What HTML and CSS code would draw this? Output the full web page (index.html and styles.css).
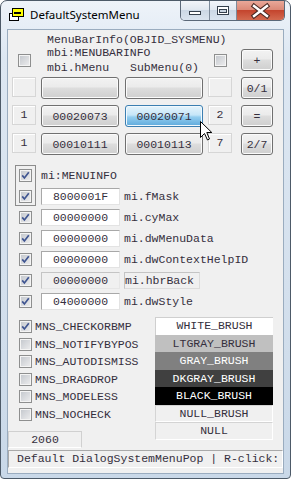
FILE: index.html
```html
<!DOCTYPE html>
<html lang="en">
<head>
   <meta charset="UTF-8">
   <meta name="viewport" content="width=device-width, initial-scale=1.0">
   <title>DefaultSystemMenu</title>
   <link rel="stylesheet" href="styles.css">
</head>
<body>
   <div class="window">
      <div class="titlebar">
         <svg class="app-icon" width="15" height="13" viewBox="0 0 15 13">
            <rect x="0.5" y="5.5" width="9" height="7" fill="#fff" stroke="#000"/>
            <rect x="3.5" y="0.5" width="11" height="8" fill="#ffff00" stroke="#000"/>
            <rect x="5" y="4" width="7" height="2" fill="#000"/>
         </svg>
         <span class="title">DefaultSystemMenu</span>
         <div class="caption-buttons">
            <div class="cap cap-min">
               <svg width="28" height="19" viewBox="0 0 28 19">
                  <rect x="8.5" y="10.5" width="11" height="3" fill="#fff" stroke="#35404c"/>
               </svg>
            </div>
            <div class="cap cap-max">
               <svg width="27" height="19" viewBox="0 0 27 19">
                  <rect x="7.5" y="5.5" width="11" height="8" fill="#fff" stroke="#35404c"/>
                  <rect x="9.5" y="8.5" width="7" height="3" fill="#c9d4e0" stroke="#35404c"/>
               </svg>
            </div>
            <div class="cap cap-close">
               <svg width="47" height="19" viewBox="0 0 47 19">
                  <path d="M17 5 L30 15 M30 5 L17 15" stroke="#4a2a24" stroke-width="4.6" stroke-linecap="square"/>
                  <path d="M17 5 L30 15 M30 5 L17 15" stroke="#fff" stroke-width="2.4" stroke-linecap="square"/>
               </svg>
            </div>
         </div>
      </div>

      <div class="client">
         <div class="mbi-head">
            <span class="chk"></span>
            <div class="mbi-text">
               <div>MenuBarInfo(OBJID_SYSMENU)</div>
               <div>mbi:MENUBARINFO</div>
               <div class="mbi-last"><span class="hmenu">mbi.hMenu</span>SubMenu(0)</div>
            </div>
            <span class="chk"></span>
            <div class="btn">+</div>
         </div>

         <div class="mbi-rows">
            <div class="box"></div>
            <div class="btn btn-wide"></div>
            <div class="btn btn-wide"></div>
            <div class="box"></div>
            <div class="btn">0/1</div>

            <div class="box">1</div>
            <div class="btn btn-wide">00020073</div>
            <div class="btn btn-wide hot">00020071</div>
            <div class="box">2</div>
            <div class="btn">=</div>

            <div class="box">1</div>
            <div class="btn btn-wide">00010111</div>
            <div class="btn btn-wide">00010113</div>
            <div class="box">7</div>
            <div class="btn">2/7</div>
         </div>

         <div class="mi">
            <div class="mi-top">
               <div class="mi-group">
                  <span class="chk checked"><svg width="11" height="11" viewBox="0 0 11 11"><path d="M2.2 5.4 L4.4 8 L8.8 2.2" fill="none" stroke="#3f5591" stroke-width="1.7"/></svg></span>
                  <span class="chk checked"><svg width="11" height="11" viewBox="0 0 11 11"><path d="M2.2 5.4 L4.4 8 L8.8 2.2" fill="none" stroke="#3f5591" stroke-width="1.7"/></svg></span>
               </div>
               <div class="mi-top-main">
                  <div class="mi-row">mi:MENUINFO</div>
                  <div class="mi-row">
                     <span class="edit">8000001F</span>
                     <span class="label">mi.fMask</span>
                  </div>
               </div>
            </div>

            <div class="mi-list">
               <div class="mi-row">
                  <span class="chk checked"><svg width="11" height="11" viewBox="0 0 11 11"><path d="M2.2 5.4 L4.4 8 L8.8 2.2" fill="none" stroke="#3f5591" stroke-width="1.7"/></svg></span>
                  <span class="edit">00000000</span>
                  <span class="label">mi.cyMax</span>
               </div>
               <div class="mi-row">
                  <span class="chk checked"><svg width="11" height="11" viewBox="0 0 11 11"><path d="M2.2 5.4 L4.4 8 L8.8 2.2" fill="none" stroke="#3f5591" stroke-width="1.7"/></svg></span>
                  <span class="edit">00000000</span>
                  <span class="label">mi.dwMenuData</span>
               </div>
               <div class="mi-row">
                  <span class="chk checked"><svg width="11" height="11" viewBox="0 0 11 11"><path d="M2.2 5.4 L4.4 8 L8.8 2.2" fill="none" stroke="#3f5591" stroke-width="1.7"/></svg></span>
                  <span class="edit">00000000</span>
                  <span class="label">mi.dwContextHelpID</span>
               </div>
               <div class="mi-row">
                  <span class="chk checked"><svg width="11" height="11" viewBox="0 0 11 11"><path d="M2.2 5.4 L4.4 8 L8.8 2.2" fill="none" stroke="#3f5591" stroke-width="1.7"/></svg></span>
                  <span class="edit disabled">00000000</span>
                  <span class="label label-box">mi.hbrBack</span>
               </div>
               <div class="mi-row">
                  <span class="chk checked"><svg width="11" height="11" viewBox="0 0 11 11"><path d="M2.2 5.4 L4.4 8 L8.8 2.2" fill="none" stroke="#3f5591" stroke-width="1.7"/></svg></span>
                  <span class="edit">04000000</span>
                  <span class="label">mi.dwStyle</span>
               </div>
            </div>
         </div>

         <div class="mns">
            <div class="mns-checks">
               <div class="mns-row"><span class="chk checked"><svg width="11" height="11" viewBox="0 0 11 11"><path d="M2.2 5.4 L4.4 8 L8.8 2.2" fill="none" stroke="#3f5591" stroke-width="1.7"/></svg></span>MNS_CHECKORBMP</div>
               <div class="mns-row"><span class="chk"></span>MNS_NOTIFYBYPOS</div>
               <div class="mns-row"><span class="chk"></span>MNS_AUTODISMISS</div>
               <div class="mns-row"><span class="chk"></span>MNS_DRAGDROP</div>
               <div class="mns-row"><span class="chk"></span>MNS_MODELESS</div>
               <div class="mns-row"><span class="chk"></span>MNS_NOCHECK</div>
               <div class="count">2060</div>
            </div>
            <div class="brushes">
               <div class="brush brush-white">WHITE_BRUSH</div>
               <div class="brush brush-ltgray">LTGRAY_BRUSH</div>
               <div class="brush brush-gray">GRAY_BRUSH</div>
               <div class="brush brush-dkgray">DKGRAY_BRUSH</div>
               <div class="brush brush-black">BLACK_BRUSH</div>
               <div class="brush brush-null">NULL_BRUSH</div>
               <div class="brush brush-null">NULL</div>
            </div>
         </div>

         <div class="status">Default DialogSystemMenuPop | R-click:</div>
      </div>

      <svg class="cursor" width="13" height="20" viewBox="0 0 13 20">
         <path d="M0.5 0.5 L0.5 16.5 L4.5 12.5 L7.5 19 L9.5 18 L6.8 11.5 L11.8 11.5 Z" fill="#fff" stroke="#000"/>
      </svg>
   </div>
</body>
</html>
```

FILE: styles.css
```css
body {
   margin: 0;
   background: #fff;
}

.window {
   position: relative;
   width: 291px;
   height: 479px;
   box-sizing: border-box;
   border: 1px solid #4d5a68;
   border-radius: 7px 7px 4px 4px;
   padding: 0 7px 5px;
   background: linear-gradient(#eef3f9, #dde7f2 12%, #d4e0ed 60%, #c9d8e8);
}

/* title bar */

.titlebar {
   display: flex;
   align-items: flex-start;
   height: 29px;
   font-family: "Noto Sans", "Open Sans", sans-serif;
   font-size: 11.5px;
   color: #000;
}

.app-icon {
   margin: 7px 0 0 1px;
}

.title {
   margin: 5px 0 0 6px;
   line-height: 18px;
}

.caption-buttons {
   display: flex;
   margin-left: auto;
   margin-right: -2px;
   border: 1px solid #5b6878;
   border-top: none;
   border-radius: 0 0 5px 5px;
   overflow: hidden;
}

.cap {
   height: 19px;
}

.cap svg {
   display: block;
}

.cap-min,
.cap-max {
   width: 28px;
   background: linear-gradient(#f2f5f9, #e1e8f0 45%, #ccd8e5 50%, #dae4ef);
   border-right: 1px solid #7d8b9b;
}

.cap-max {
   width: 26px;
}

.cap-close {
   width: 47px;
   background: linear-gradient(#e9a899, #dc8a78 45%, #c4452e 50%, #d36a50);
}

/* client area */

.client {
   height: 443px;
   background: #f0f0f0;
   box-shadow: 0 0 0 1px #9aacbf;
   font-family: "Liberation Mono", "DejaVu Sans Mono", monospace;
   font-size: 11.5px;
   color: #352f3d;
}

.chk {
   display: block;
   flex: none;
   width: 13px;
   height: 13px;
   box-sizing: border-box;
   border: 1px solid #8e8f8f;
   background: linear-gradient(135deg, #c2c6cc, #eeeeef);
   box-shadow: inset 0 0 0 1px #f4f4f4;
}

.chk svg {
   display: block;
}

.btn {
   display: flex;
   justify-content: center;
   align-items: center;
   justify-self: end;
   width: 32px;
   height: 22px;
   box-sizing: border-box;
   border: 1px solid #707070;
   border-radius: 3px;
   background: linear-gradient(#f2f2f2, #ebebeb 45%, #dddddd 50%, #cfcfcf);
   box-shadow: inset 0 0 0 1px #fbfbfb;
}

.btn-wide {
   width: 78px;
}

.btn.hot {
   border-color: #3c7fb1;
   background: linear-gradient(#e6f4fc, #c6e6f8 45%, #93cdef 55%, #5eaadc);
   box-shadow: inset 0 0 0 1px #f1f9fe;
}

.box {
   width: 24px;
   height: 20px;
   box-sizing: border-box;
   border: 1px solid #d6d6d6;
   box-shadow: inset 1px 1px 0 #fff;
   text-align: center;
   line-height: 18px;
}

/* MenuBarInfo part */

.mbi-head,
.mbi-rows {
   display: grid;
   grid-template-columns: 24px 78px 79px 24px 36px;
   column-gap: 5px;
   margin-left: 4px;
}

.mbi-head {
   height: 47px;
   align-items: start;
}

.mbi-head .chk {
   margin-top: 24px;
   justify-self: center;
}

.mbi-head .btn {
   margin-top: 19px;
}

.mbi-text {
   grid-column: 2 / 4;
   margin-top: 3px;
   padding-left: 6px;
   line-height: 13px;
   white-space: nowrap;
}

.mbi-last {
   margin-top: 2px;
}

.hmenu {
   display: inline-block;
   width: 83px;
}

.mbi-rows {
   grid-auto-rows: 22px;
   row-gap: 6px;
}

/* MenuInfo part */

.mi {
   margin-top: 10px;
}

.mi-top {
   display: flex;
   height: 41px;
}

.mi-group {
   display: flex;
   flex-direction: column;
   align-items: center;
   gap: 8px;
   width: 21px;
   height: 41px;
   box-sizing: border-box;
   margin-left: 7px;
   padding-top: 3px;
   border: 1px solid #8c8c8c;
}

.mi-top-main {
   display: flex;
   flex-direction: column;
   gap: 4px;
   margin-left: 5px;
   padding-top: 2px;
}

.mi-row {
   display: flex;
   align-items: center;
   height: 17px;
   white-space: nowrap;
}

.mi-list {
   display: flex;
   flex-direction: column;
   gap: 4px;
   margin-top: 3px;
}

.mi-list .chk {
   margin-left: 11px;
}

.mi-list .edit {
   margin-left: 9px;
}

.edit {
   width: 79px;
   height: 17px;
   box-sizing: border-box;
   border: 1px solid;
   border-color: #a8a8a8 #e3e3e3 #e3e3e3 #a8a8a8;
   background: #fff;
   text-align: center;
   line-height: 15px;
}

.edit.disabled {
   background: #f0f0f0;
   border-color: #c4c4c4 #e6e6e6 #e6e6e6 #c4c4c4;
}

.label {
   margin-left: 4px;
}

.label-box {
   width: 76px;
   height: 17px;
   box-sizing: border-box;
   border: 1px solid;
   border-color: #c4c4c4 #dcdcdc #dcdcdc #c4c4c4;
   line-height: 15px;
}

/* MNS flags + brushes */

.mns {
   display: grid;
   grid-template-columns: 147px 118px;
   margin-top: 7px;
}

.mns-checks {
   padding-top: 1px;
}

.mns-row {
   display: flex;
   align-items: center;
   gap: 3px;
   height: 17.5px;
   padding-left: 11px;
   white-space: nowrap;
}

.count {
   width: 74px;
   height: 17px;
   box-sizing: border-box;
   margin-top: 8px;
   border: 1px solid;
   border-color: #d0d0d0 #d0d0d0 #fff #d0d0d0;
   text-align: center;
   line-height: 15px;
}

.brushes {
   display: flex;
   flex-direction: column;
}

.brush {
   height: 17.5px;
   box-sizing: border-box;
   text-align: center;
   line-height: 17px;
   white-space: nowrap;
}

.brush-white {
   background: #fff;
   border-top: 1px solid #cfcfcf;
   border-left: 1px solid #cfcfcf;
   line-height: 15px;
}

.brush-ltgray {
   background: #c0c0c0;
}

.brush-gray {
   background: #808080;
   color: #fff;
}

.brush-dkgray {
   background: #404040;
   color: #fff;
}

.brush-black {
   background: #000;
   color: #fff;
}

.brush-null {
   border: 1px solid;
   border-color: #d4d4d4 #fff #fff #d4d4d4;
   line-height: 15px;
}

/* status bar */

.status {
   height: 18px;
   box-sizing: border-box;
   margin-top: 2px;
   padding-left: 8px;
   border: 1px solid;
   border-color: #a9a9a9 #fff #fff #a9a9a9;
   line-height: 16px;
   white-space: nowrap;
   overflow: hidden;
}

.cursor {
   position: absolute;
   left: 199px;
   top: 120px;
}
```
